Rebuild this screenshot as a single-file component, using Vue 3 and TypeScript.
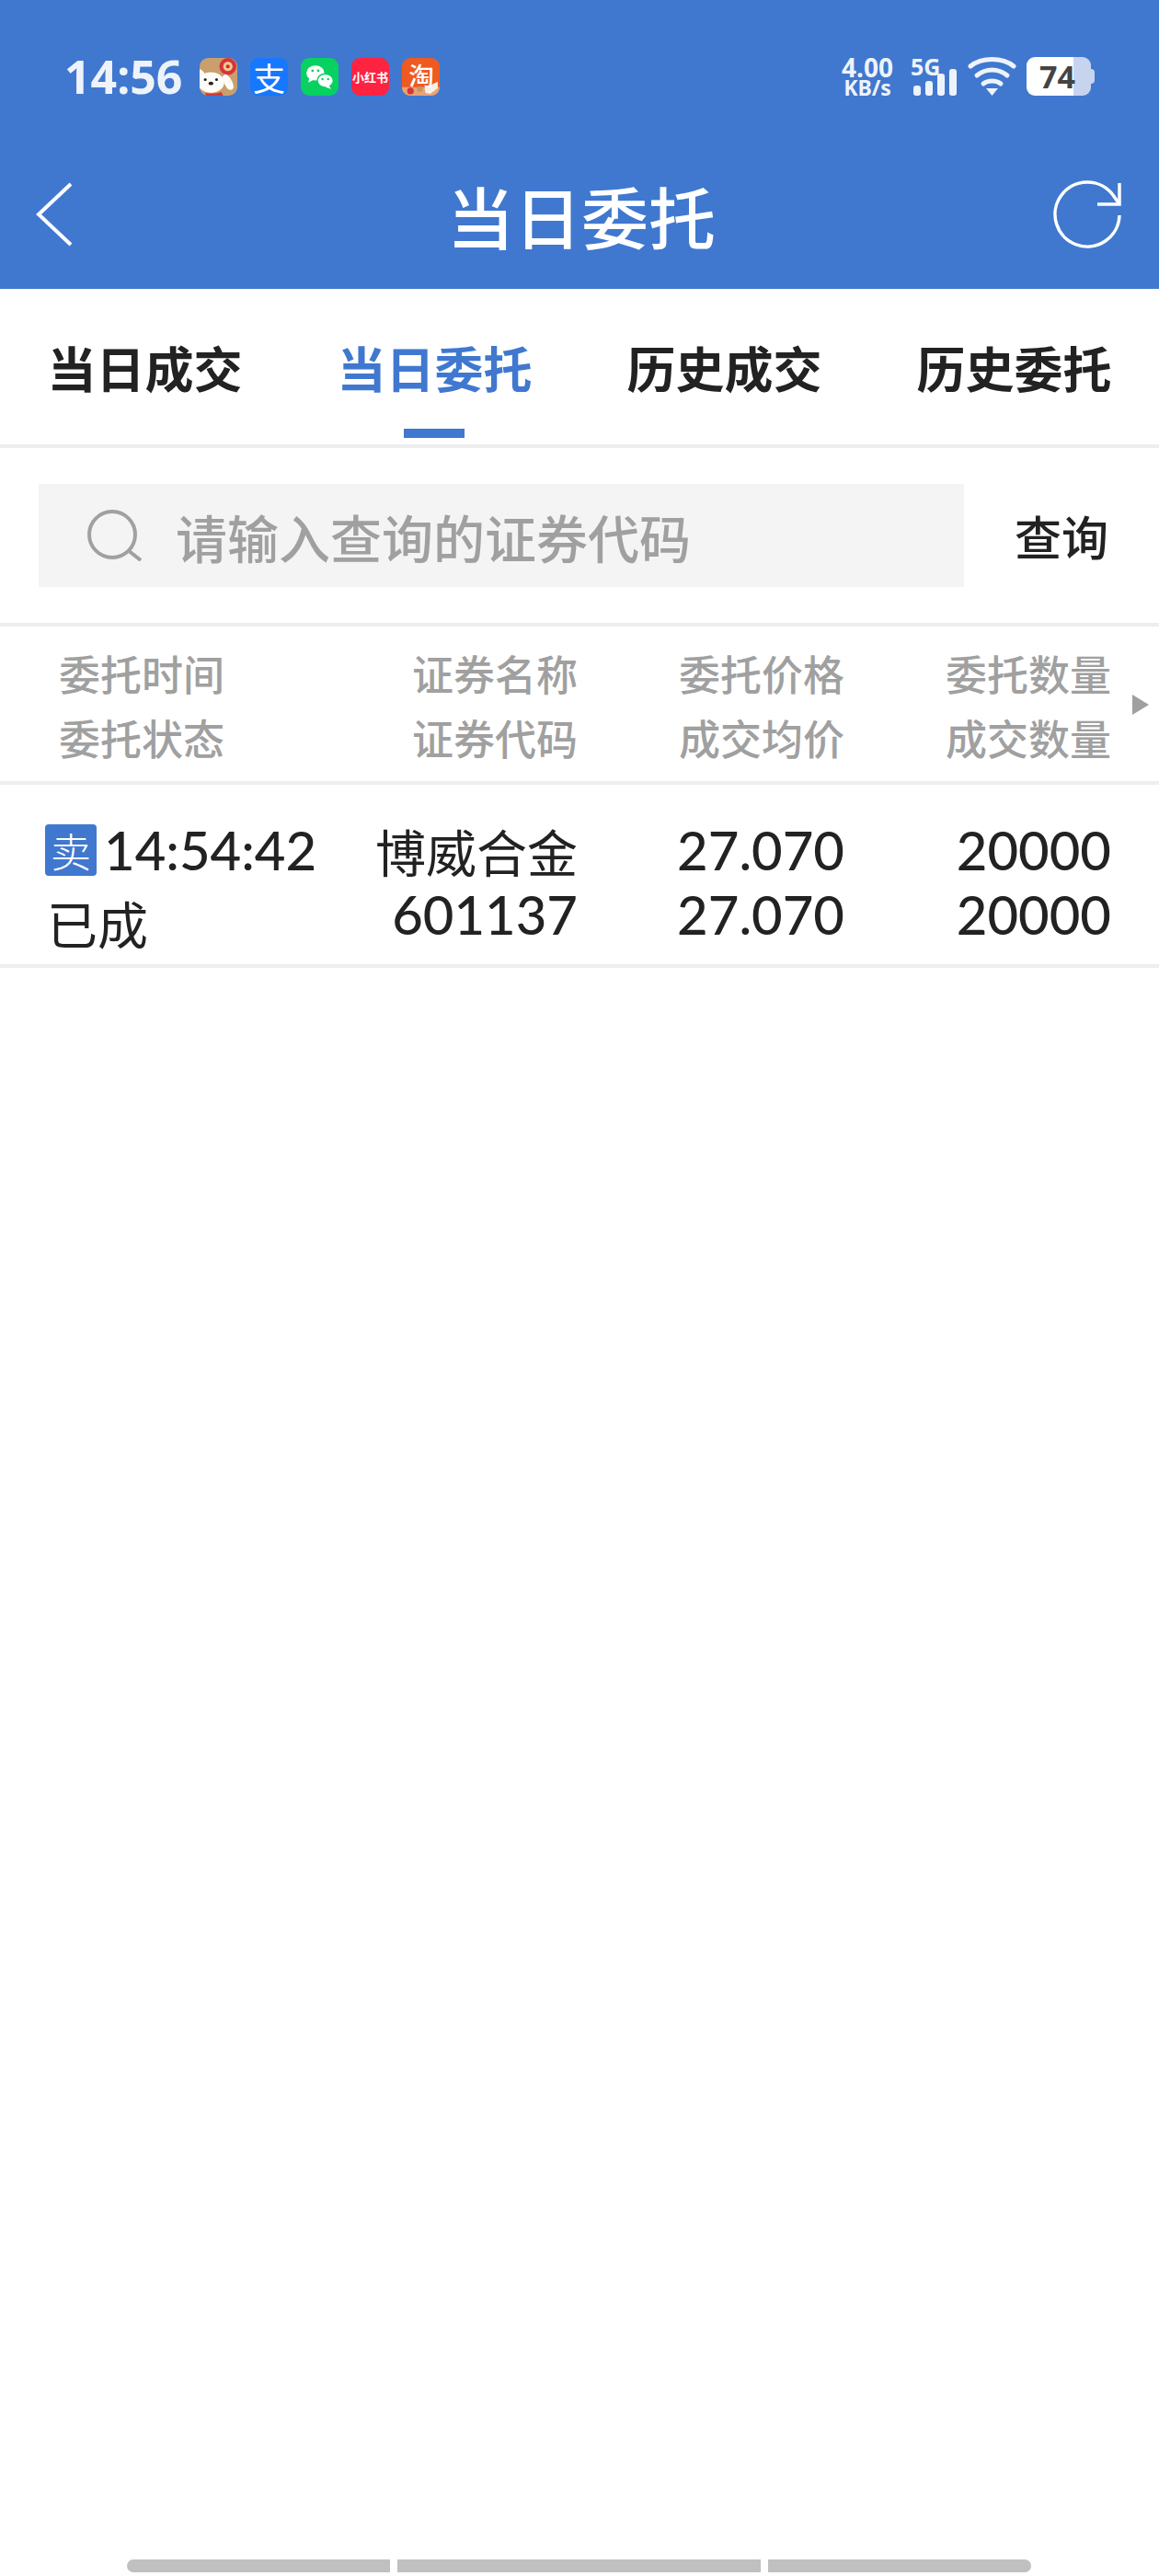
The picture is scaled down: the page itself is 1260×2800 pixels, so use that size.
<template>
  <div class="page">
    <header class="topbar">
      <div class="status">
        <div class="status-left">
          <span class="clock">14:56</span>
          <div class="apps">
            <svg class="app" viewBox="0 0 40 40">
              <rect width="40" height="40" rx="9" fill="#c99f6e" />
              <circle cx="30" cy="9" r="9" fill="#d8343a" />
              <circle cx="30" cy="9" r="5" fill="#f1c98d" />
              <circle cx="30" cy="9" r="2" fill="#c92a2a" />
              <path d="M27 17c4 1 8 7 9 13 0 4-3 5-6 3-3-3-5-9-6-13z" fill="#fffdf8" />
              <ellipse cx="12" cy="26" rx="14" ry="11" fill="#fffdf8" />
              <path d="M0 12c2 0 5 3 6 7l-6 4z" fill="#fffdf8" />
              <circle cx="6" cy="23" r="1.500" fill="#222" />
              <circle cx="18" cy="23" r="1.500" fill="#222" />
              <ellipse cx="12" cy="27" rx="2.600" ry="1.800" fill="#222" />
              <path d="M6 37c5 1 12 1 17-1l2 4H7z" fill="#d8343a" />
            </svg>
            <div class="app app-text alipay">支</div>
            <svg class="app" viewBox="0 0 40 40">
              <rect width="40" height="40" rx="9" fill="#07d160" />
              <ellipse cx="15.500" cy="16" rx="9.500" ry="8" fill="#fff" />
              <path d="M9 21l-1 5 6-3z" fill="#fff" />
              <ellipse cx="26" cy="24" rx="8.500" ry="7.200" fill="#fff" stroke="#07d160" stroke-width="1.400" />
              <path d="M30 29l2 4-6-2z" fill="#fff" />
              <circle cx="12.500" cy="13.500" r="1.400" fill="#07d160" />
              <circle cx="18.500" cy="13.500" r="1.400" fill="#07d160" />
              <circle cx="23" cy="22.500" r="1.200" fill="#07d160" />
              <circle cx="29" cy="22.500" r="1.200" fill="#07d160" />
            </svg>
            <div class="app app-text xhs">小红书</div>
            <svg class="app" viewBox="0 0 40 40">
              <rect width="40" height="40" rx="9" fill="#ee5a20" />
              <path d="M0 31h40v0c0 5-4 9-9 9H9c-5 0-9-4-9-9z" fill="#e9a277" />
              <path d="M24 32l14-7v7l-8 6-5-1z" fill="#f7f1e6" />
              <circle cx="9" cy="35" r="3.500" fill="#d8343a" />
              <circle cx="19" cy="33" r="3" fill="#c8945a" />
              <text x="20.500" y="29" text-anchor="middle" class="tao">淘</text>
            </svg>
          </div>
        </div>
        <div class="status-right">
          <div class="speed">
            <span class="speed-num">4.00</span>
            <span class="speed-unit">KB/s</span>
          </div>
          <div class="signal">
            <span class="signal-label">5G</span>
            <div class="bars">
              <i v-for="h in barHeights" :key="h" :style="{ height: h + 'px' }"></i>
            </div>
          </div>
          <svg class="wifi" viewBox="0 0 53 42">
            <g fill="none" stroke="#eef3fb" stroke-width="5" stroke-linecap="round">
              <path d="M3 10C15 0 38 0 50 10" />
              <path d="M10 20C20 12 33 12 43 20" />
              <path d="M17 29C22 25 31 25 36 29" />
            </g>
            <path d="M20 34h13l-6.500 8z" fill="#eef3fb" />
          </svg>
          <div class="battery">
            <div class="battery-body"><span class="battery-num">74</span></div>
            <div class="battery-nub"></div>
          </div>
        </div>
      </div>
      <div class="navbar">
        <svg class="back" viewBox="0 0 41 70">
          <path d="M39 2L4 35l35 33" fill="none" stroke="#fff" stroke-width="4" />
        </svg>
        <h1 class="title">当日委托</h1>
        <svg class="refresh" viewBox="0 0 76 76">
          <path d="M73 39A35 35 0 1 1 66 17L73 27" fill="none" stroke="#fff" stroke-width="3.500" />
          <path d="M73 4V27H49" fill="none" stroke="#fff" stroke-width="3.500" />
        </svg>
      </div>
    </header>

    <nav class="tabs">
      <div v-for="(tab, i) in tabs" :key="tab" class="tab" :class="{ active: i === 1 }">{{ tab }}</div>
    </nav>

    <section class="search-row">
      <div class="search-box">
        <svg class="search-icon" viewBox="0 0 60 56">
          <circle cx="27" cy="27" r="25" fill="none" stroke="#a0a0a0" stroke-width="4" />
          <path d="M44 44l14 11" fill="none" stroke="#a0a0a0" stroke-width="4" />
        </svg>
        <span class="placeholder">请输入查询的证券代码</span>
      </div>
      <span class="query">查询</span>
    </section>

    <section class="table-head">
      <div class="cell cell-time">
        <span>委托时间</span>
        <span>委托状态</span>
      </div>
      <div class="cell cell-name">
        <span>证券名称</span>
        <span>证券代码</span>
      </div>
      <div class="cell cell-price">
        <span>委托价格</span>
        <span>成交均价</span>
      </div>
      <div class="cell cell-qty">
        <span>委托数量</span>
        <span>成交数量</span>
      </div>
      <div class="more"></div>
    </section>

    <section class="table-row">
      <div class="cell cell-time">
        <div class="time-line"><span class="sell">卖</span><span class="num">14:54:42</span></div>
        <span class="state">已成</span>
      </div>
      <div class="cell cell-name">
        <span>博威合金</span>
        <span class="num">601137</span>
      </div>
      <div class="cell cell-price">
        <span class="num">27.070</span>
        <span class="num">27.070</span>
      </div>
      <div class="cell cell-qty">
        <span class="num">20000</span>
        <span class="num">20000</span>
      </div>
    </section>

    <div class="spacer"></div>

    <div class="pills">
      <i class="pill pill-l"></i>
      <i class="pill pill-m"></i>
      <i class="pill pill-r"></i>
    </div>
  </div>
</template>

<script setup lang="ts">
const tabs: string[] = ['当日成交', '当日委托', '历史成交', '历史委托']
const barHeights: number[] = [11, 16, 24, 29]
</script>

<style>
body {
  margin: 0;
  background: #fff;
}
</style>

<style scoped>
.page {
  width: 1260px;
  height: 2800px;
  display: flex;
  flex-direction: column;
  background: #fff;
  font-family: "Noto Sans CJK SC", "Noto Sans", sans-serif;
  color: #222;
  overflow: hidden;
}

.topbar {
  height: 314px;
  box-sizing: border-box;
  background: #4078cf;
  padding-top: 62px;
  flex-shrink: 0;
}

.status {
  height: 42px;
  display: flex;
  justify-content: space-between;
  align-items: center;
  padding: 0 70px;
}

.status-left {
  display: flex;
  align-items: center;
}

.clock {
  width: 147px;
  font-family: "Noto Sans", sans-serif;
  font-size: 50px;
  font-weight: 700;
  line-height: 42px;
  color: #eef3fb;
}

.apps {
  display: flex;
  gap: 14px;
}

.app {
  width: 41px;
  height: 41px;
  display: block;
}

.app-text {
  border-radius: 9px;
  color: #fff;
  display: flex;
  align-items: center;
  justify-content: center;
  line-height: 1;
}

.alipay {
  background: #1677ff;
  font-size: 35px;
}

.xhs {
  background: #fe2341;
  font-size: 13px;
  font-weight: 700;
  white-space: nowrap;
}

.tao {
  font-size: 27px;
  font-weight: 500;
  fill: #fff;
}

.status-right {
  display: flex;
  align-items: center;
}

.speed {
  width: 60px;
  display: flex;
  flex-direction: column;
  align-items: center;
  color: #eef3fb;
  font-family: "Noto Sans", sans-serif;
  font-weight: 700;
}

.speed-num {
  font-size: 28px;
  line-height: 24px;
}

.speed-unit {
  font-size: 23px;
  line-height: 20px;
}

.signal {
  margin-left: 17px;
  width: 50px;
  height: 42px;
  position: relative;
}

.signal-label {
  position: absolute;
  left: 0;
  top: -1px;
  font-family: "Noto Sans", sans-serif;
  font-size: 25px;
  line-height: 22px;
  font-weight: 700;
  color: #eef3fb;
}

.bars {
  position: absolute;
  left: 3px;
  bottom: 0;
  display: flex;
  align-items: flex-end;
  gap: 5px;
}

.bars i {
  width: 8px;
  border-radius: 3px;
  background: #eef3fb;
}

.wifi {
  margin-left: 12px;
  width: 53px;
  height: 42px;
}

.battery {
  margin-left: 11px;
  display: flex;
  align-items: center;
}

.battery-body {
  width: 70px;
  height: 42px;
  box-sizing: border-box;
  padding-left: 14px;
  border-radius: 9px;
  background: linear-gradient(to right, #fff 51px, #c7d4f0 51px);
}

.battery-num {
  display: block;
  font-family: "Noto Sans", sans-serif;
  font-size: 34px;
  font-weight: 700;
  line-height: 42px;
  color: #444;
}

.battery-nub {
  width: 4px;
  height: 16px;
  border-radius: 0 4px 4px 0;
  background: #c7d4f0;
}

.navbar {
  height: 210px;
  box-sizing: border-box;
  display: flex;
  align-items: center;
  justify-content: space-between;
  padding: 48px 40px 0 38px;
}

.back {
  width: 41px;
  height: 70px;
  margin-right: 41px;
}

.refresh {
  width: 76px;
  height: 76px;
}

.title {
  margin: 0;
  font-size: 73px;
  font-weight: 500;
  line-height: 1;
  color: #fff;
}

.tabs {
  height: 173px;
  flex-shrink: 0;
  box-sizing: border-box;
  display: grid;
  grid-template-columns: repeat(4, 1fr);
  border-bottom: 4px solid #eee;
}

.tab {
  position: relative;
  display: flex;
  justify-content: center;
  align-items: center;
  font-size: 53px;
  font-weight: 700;
  color: #222;
}

.tab.active {
  color: #4078cf;
}

.tab.active::after {
  content: "";
  position: absolute;
  left: 124px;
  bottom: 7px;
  width: 66px;
  height: 10px;
  background: #4078cf;
}

.search-row {
  height: 194px;
  flex-shrink: 0;
  box-sizing: border-box;
  display: flex;
  align-items: center;
  padding: 0 55px 0 42px;
  border-bottom: 4px solid #eee;
}

.search-box {
  width: 1006px;
  height: 112px;
  display: flex;
  align-items: center;
  background: #f4f4f4;
}

.search-icon {
  width: 60px;
  height: 56px;
  margin-left: 53px;
}

.placeholder {
  margin-left: 36px;
  font-size: 56px;
  font-weight: 500;
  color: #a0a0a0;
}

.query {
  margin-left: 55px;
  font-size: 51px;
  font-weight: 500;
  color: #222;
}

.table-head,
.table-row {
  display: grid;
  grid-template-columns: 320px 308px 290px 290px;
  flex-shrink: 0;
  box-sizing: border-box;
  border-bottom: 4px solid #eee;
  position: relative;
}

.table-head {
  height: 172px;
  padding-top: 16px;
  font-size: 45px;
  font-weight: 500;
  color: #a0a0a0;
}

.table-row {
  height: 199px;
  padding-top: 36px;
  font-size: 55px;
  color: #222;
}

.cell {
  display: flex;
  flex-direction: column;
  align-items: flex-end;
  line-height: 70px;
  white-space: nowrap;
}

.cell-time {
  align-items: flex-start;
  padding-left: 64px;
}

.table-row .cell-time {
  padding-left: 49px;
}

.num {
  font-family: Lato, "Noto Sans", sans-serif;
  font-size: 58px;
  font-weight: 500;
}

.time-line {
  display: flex;
  align-items: center;
}

.sell {
  width: 56px;
  height: 56px;
  margin-right: 8px;
  border-radius: 4px;
  background: #4078cf;
  color: #fff;
  font-size: 44px;
  font-weight: 300;
  line-height: 56px;
  text-align: center;
}

.state {
  margin-left: 2px;
  margin-top: 8px;
}

.more {
  position: absolute;
  left: 1231px;
  top: 74px;
  border-left: 18px solid #a0a0a0;
  border-top: 11px solid transparent;
  border-bottom: 11px solid transparent;
}

.spacer {
  flex: 1;
}

.pills {
  display: flex;
  gap: 8px;
  padding: 0 0 4px 138px;
}

.pill {
  height: 14px;
  background: #c0c0c0;
}

.pill-l {
  width: 286px;
  border-radius: 7px 0 0 7px;
}

.pill-m {
  width: 395px;
}

.pill-r {
  width: 286px;
  border-radius: 0 7px 7px 0;
}
</style>
